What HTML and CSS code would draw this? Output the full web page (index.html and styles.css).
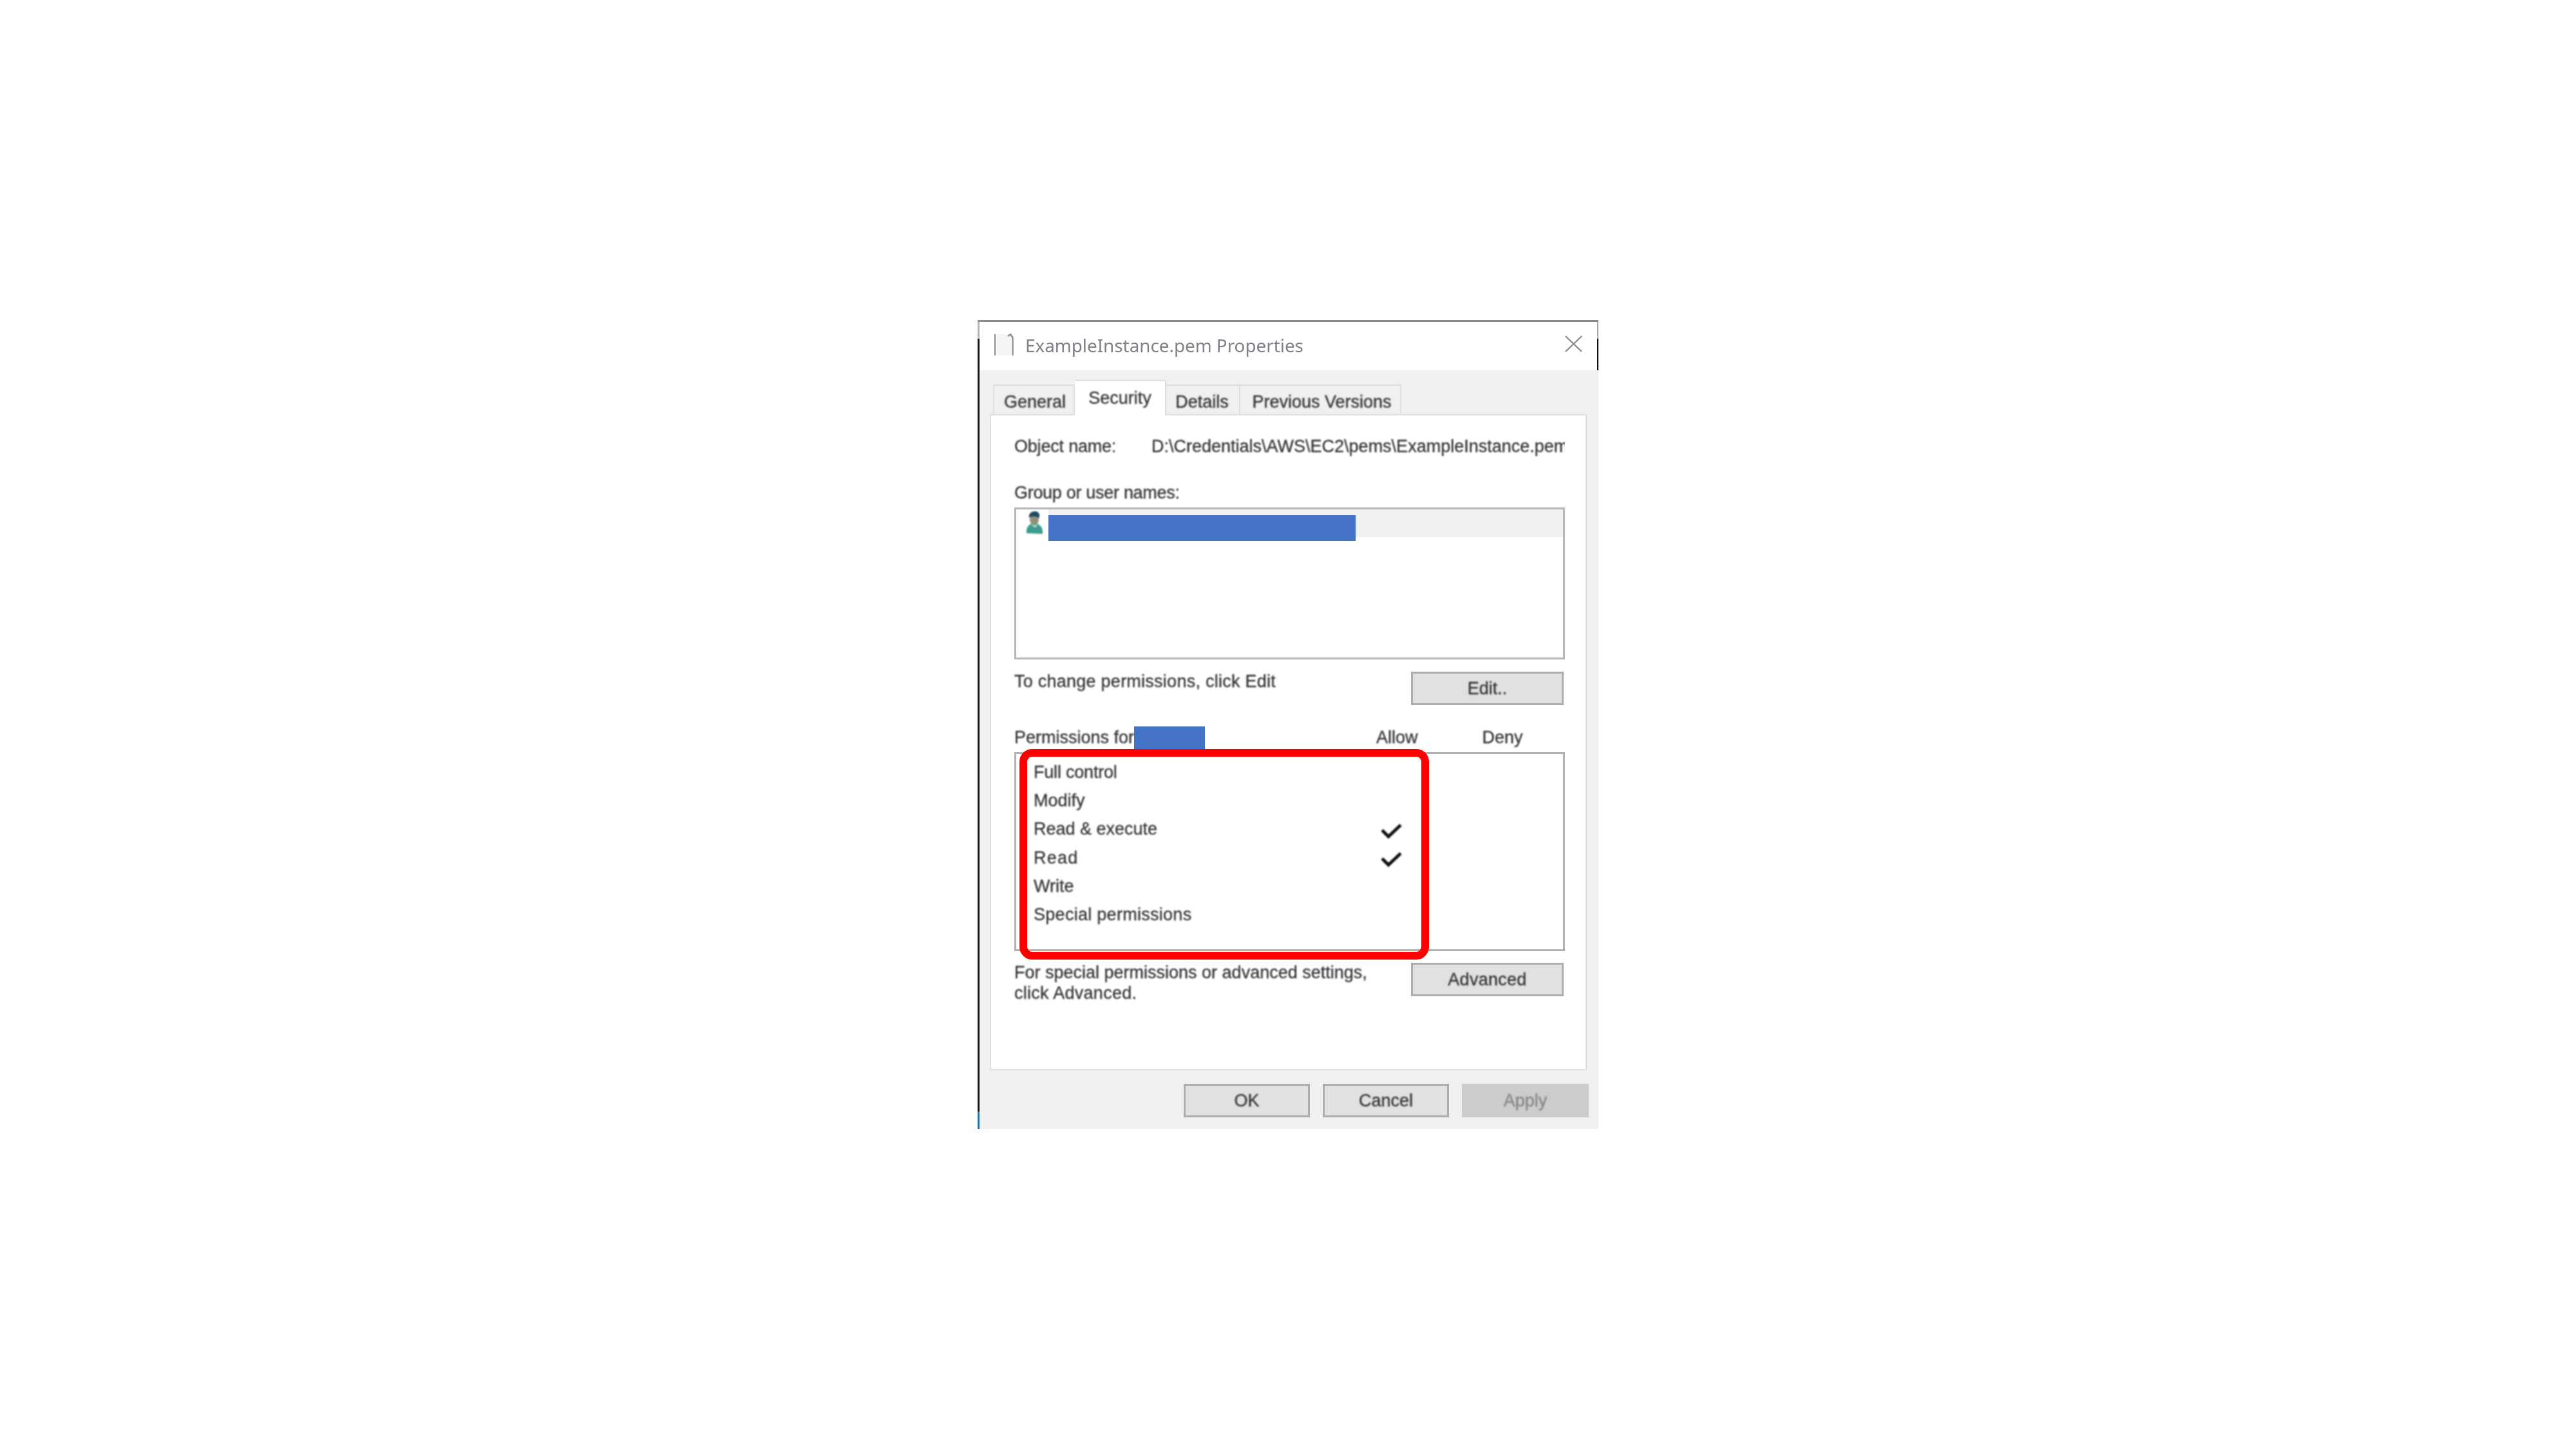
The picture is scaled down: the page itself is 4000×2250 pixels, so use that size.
FILE: index.html
```html
<!DOCTYPE html>
<html lang="en">
<head>
<meta charset="utf-8">
<title>ExampleInstance.pem Properties</title>
<link rel="stylesheet" href="styles.css">
</head>
<body>
<div class="dialog">
  <header class="titlebar">
    <svg class="file-icon" viewBox="0 0 30 35" aria-hidden="true">
      <rect x="4" y="1" width="22" height="33" fill="#f3f5f7"/>
      <path d="M1 1V34" stroke="#8f8f8f" stroke-width="2.4" fill="none"/>
      <path d="M21 4 L25 1 L28.500 6 V34" stroke="#8f8f8f" stroke-width="2.4" fill="none"/>
    </svg>
    <span class="title">ExampleInstance.pem Properties</span>
    <svg class="close-icon" viewBox="0 0 27 26" aria-hidden="true">
      <path d="M1 1L26 25M26 1L1 25" stroke="#8a8a8a" stroke-width="2.4" fill="none"/>
    </svg>
  </header>

  <nav class="tabs">
    <div class="tab tab-general"><span class="txt">General</span></div>
    <div class="tab tab-active"><span class="txt">Security</span></div>
    <div class="tab tab-details"><span class="txt">Details</span></div>
    <div class="tab tab-versions"><span class="txt">Previous Versions</span></div>
  </nav>

  <section class="panel">
    <div class="object-row">
      <span class="txt object-label">Object name:</span>
      <span class="txt object-path">D:\Credentials\AWS\EC2\pems\ExampleInstance.pem</span>
    </div>

    <div class="txt group-label">Group or user names:</div>
    <div class="listbox">
      <div class="list-row">
        <div class="list-icon">
          <svg class="user-icon" viewBox="0 0 28 36" aria-hidden="true">
            <path d="M2 34C1 26 5 20 11 19H18C24 21 28 27 27 35Z" fill="#3c9c8e"/>
            <ellipse cx="14" cy="13" rx="7" ry="8" fill="#8f8f7c"/>
            <path d="M6 10C5 3 10 0 15 0C21 0 24 5 21 11C18 7 11 7 6 10Z" fill="#1f4763"/>
            <path d="M11 21L15 24L18 21" stroke="#d5e8e4" stroke-width="2" fill="none"/>
          </svg>
        </div>
        <div class="list-fill"><div class="redact-name"></div></div>
      </div>
    </div>

    <div class="action-row">
      <span class="txt change-text">To change permissions, click Edit</span>
      <button class="btn btn-side"><span class="txt">Edit..</span></button>
    </div>

    <div class="perm-head">
      <span class="txt">Permissions for</span>
      <span class="redact-user"></span>
      <span class="txt col-allow">Allow</span>
      <span class="txt col-deny">Deny</span>
    </div>

    <div class="permbox">
      <div class="perm-row"><span class="txt tight">Full control</span></div>
      <div class="perm-row"><span class="txt">Modify</span></div>
      <div class="perm-row"><span class="txt">Read &amp; execute</span>
        <svg class="check" viewBox="0 0 34 25" aria-hidden="true"><path d="M3 11L13 21L32 3" stroke="#111" stroke-width="5" fill="none"/></svg>
      </div>
      <div class="perm-row"><span class="txt spread">Read</span>
        <svg class="check" viewBox="0 0 34 25" aria-hidden="true"><path d="M3 11L13 21L32 3" stroke="#111" stroke-width="5" fill="none"/></svg>
      </div>
      <div class="perm-row"><span class="txt">Write</span></div>
      <div class="perm-row"><span class="txt wide">Special permissions</span></div>
      <div class="highlight"></div>
    </div>

    <div class="advanced-row">
      <p class="txt advanced-text">For special permissions or advanced settings,<br><span class="wide">click Advanced.</span></p>
      <button class="btn btn-side"><span class="txt wide">Advanced</span></button>
    </div>
  </section>

  <footer class="footer">
    <button class="btn btn-foot"><span class="txt">OK</span></button>
    <button class="btn btn-foot"><span class="txt">Cancel</span></button>
    <button class="btn btn-foot btn-disabled"><span class="txt">Apply</span></button>
  </footer>
</div>
</body>
</html>
```

FILE: styles.css
```css
* { box-sizing: border-box; }
html, body { margin: 0; background: #fff; }
body {
  width: 4000px;
  height: 2250px;
  padding: 497px 0 0 1518px;
  overflow: hidden;
  font-family: "Liberation Sans", Arial, sans-serif;
  font-size: 27px;
  line-height: 32px;
  color: #333;
}
.txt {
  display: inline-block;
  filter: blur(0.8px);
  -webkit-text-stroke: 0.3px currentColor;
}
.wide { letter-spacing: 0.28px; }
.tight { letter-spacing: -0.2px; }
.spread { letter-spacing: 1.2px; }

.dialog {
  width: 964px;
  height: 1256px;
  padding-left: 3px;
  border-top: 3px solid #8c8c8c;
  background:
    linear-gradient(to bottom, #b4b4b4 0 26px, #141414 26px 1226px, #2a6f99 1226px) left top / 3px 100% no-repeat,
    #f0f0f0;
}

.titlebar {
  height: 75px;
  display: flex;
  align-items: center;
  padding-left: 23px;
  background:
    linear-gradient(to bottom, #a8a8a8 0 26px, #111 26px) right top / 2px 100% no-repeat,
    #fff;
}
.file-icon { width: 30px; height: 35px; margin-top: -5px; filter: blur(0.7px); }
.title {
  margin-left: 18px;
  margin-top: -4px;
  font-family: "Noto Sans", sans-serif;
  font-size: 27.800px;
  color: #817f88;
  filter: blur(0.6px);
}
.close-icon { width: 27px; height: 26px; margin-left: auto; margin-right: 25px; margin-top: -8px; filter: blur(0.7px); }

.tabs {
  display: flex;
  align-items: flex-end;
  height: 53px;
  margin: 15px 0 0 21px;
}
.tab {
  height: 46px;
  background: #f0f0f0;
  border: 2px solid #dedede;
  border-bottom: none;
  border-left-width: 0;
  padding-top: 9px;
  text-align: center;
}
.tab-general { width: 127px; border-left-width: 2px; padding-left: 3px; }
.tab-active {
  width: 142px;
  height: 55px;
  margin-bottom: -2px;
  padding-top: 10px;
  background: #fff;
  position: relative;
  z-index: 1;
}
.tab-details { width: 115px; padding-right: 2px; }
.tab-versions { width: 250px; padding-left: 5px; }

.panel {
  width: 927px;
  height: 1019px;
  margin-left: 16px;
  padding: 32px 0 0 36px;
  background: #fff;
  border: 2px solid #e0e0e0;
}

.object-row { display: flex; height: 32px; width: 855px; overflow: hidden; }
.object-label { width: 213px; flex: none; letter-spacing: -0.2px; }
.object-path { white-space: nowrap; }

.group-label { display: block; margin-top: 40px; letter-spacing: -0.3px; }

.listbox {
  width: 855px;
  height: 236px;
  margin-top: 7px;
  border: 3px solid #b4b4bb;
  background: #fff;
}
.list-row { display: flex; height: 43px; }
.list-icon { width: 50px; flex: none; padding: 3px 0 0 14px; }
.user-icon { width: 28px; height: 36px; display: block; filter: blur(1.1px); }
.list-fill { flex: 1; background: #f0f0f0; }
.redact-name { width: 477px; height: 40px; margin-top: 9px; background: #4472c4; }

.action-row {
  display: flex;
  justify-content: space-between;
  width: 853px;
  margin-top: 19px;
}
.change-text { margin-top: -1px; letter-spacing: 0.25px; }

.btn {
  padding: 0;
  font: inherit;
  color: inherit;
  background: #e1e1e1;
  border: 3px solid #adadad;
}
.btn-side { width: 237px; height: 52px; }
.btn-foot { width: 196px; height: 52px; }
.btn-disabled { width: 197px; background: #cccccc; border-color: #cccccc; color: #858585; }

.perm-head {
  display: flex;
  align-items: center;
  height: 32px;
  margin-top: 34px;
  width: 855px;
  white-space: nowrap;
}
.redact-user { width: 110px; height: 35px; flex: none; background: #4472c4; }
.col-allow { margin-left: 266px; }
.col-deny { margin-left: 100px; }

.permbox {
  position: relative;
  width: 855px;
  height: 309px;
  margin-top: 7px;
  padding: 6px 0 0 27px;
  border: 3px solid #b0b0b0;
  background: #fff;
}
.perm-row {
  display: flex;
  align-items: center;
  height: 44.200px;
  padding-right: 250px;
  white-space: nowrap;
}
.check { width: 34px; height: 25px; margin-left: auto; margin-top: 6px; filter: blur(0.8px); }
.highlight {
  position: absolute;
  left: 5px;
  top: -8px;
  width: 636px;
  height: 327px;
  border: 12px solid #ff0000;
  border-radius: 20px;
}

.advanced-row {
  display: flex;
  justify-content: space-between;
  width: 853px;
  margin-top: 18px;
}
.advanced-text { margin: -1px 0 0; }

.footer {
  display: flex;
  justify-content: flex-end;
  gap: 20px;
  margin-top: 21px;
  padding-right: 15px;
}
```
